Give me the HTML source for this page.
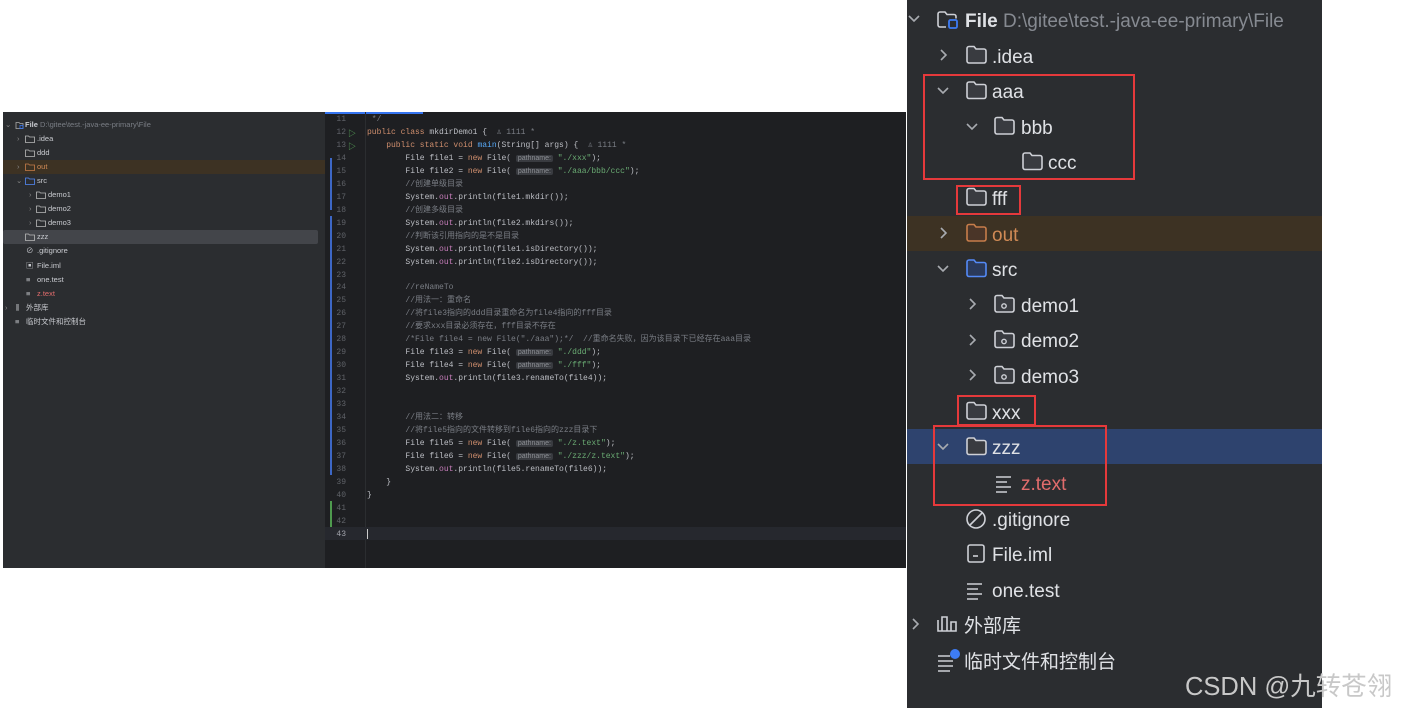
<!DOCTYPE html>
<html><head><meta charset="utf-8"><style>
*{margin:0;padding:0;box-sizing:border-box}
body{width:1401px;height:708px;background:#fff;position:relative;overflow:hidden;font-family:"Liberation Sans","Noto Sans CJK SC",sans-serif}
.abs{position:absolute}
#lt{left:3px;top:112px;width:322px;height:456px;background:#2b2d30}
#ed{left:325px;top:112px;width:581px;height:456px;background:#1e1f22}
#rp{left:907px;top:0;width:415px;height:708px;background:#2b2d30}
.rr{position:absolute;height:24px;line-height:24px;font-size:19px;color:#dfe1e5;white-space:nowrap;margin-top:2px}
.rr svg,.sr svg{position:absolute}
.sr{position:absolute;height:12px;line-height:12px;font-size:7.5px;color:#c9cbd0;white-space:nowrap}
.cl{position:absolute;left:0;height:13px;line-height:13px;font-family:"Liberation Mono","Noto Sans CJK SC",monospace;font-size:8px;color:#bcbec4;white-space:pre}
.ln{position:absolute;left:0;width:21px;text-align:right;color:#5f6268}
.code{position:absolute;left:42px}
.k{color:#cf8e6d}.s{color:#6aab73}.c{color:#7a7e85}.o{color:#c77dbb}.m{color:#56a8f5}
.h{background:#393b40;color:#8c8f94;font-family:"Liberation Sans",sans-serif;font-size:7px;padding:0 2px;border-radius:2px}
.box{position:absolute;border:2px solid #e5393b}
</style></head><body>

<div id="lt" class="abs">
  <div class="abs" style="left:0;top:48px;width:322px;height:14px;background:#3d3223"></div>
  <div class="abs" style="left:0;top:118px;width:315px;height:14px;background:#43454a;border-radius:2px"></div>
</div>
<div class="sr" style="left:5px;top:119px"><span style="color:#888">⌄</span></div>
<div class="sr" style="left:25px;top:119px"><b>File</b> <span style="color:#7a7e85">D:\gitee\test.-java-ee-primary\File</span></div>
<svg class="abs" style="left:15px;top:121px" width="9" height="8"><path d="M1 1.5h3l1 1h3v5h-7z" fill="none" stroke="#aaa" stroke-width=".8"/><rect x="5" y="4.5" width="3" height="3" fill="none" stroke="#3574f0" stroke-width=".8"/></svg>
<div class="sr" style="left:17px;top:133px;color:#888">›</div>
<div class="sr" style="left:17px;top:161px;color:#888">›</div>
<div class="sr" style="left:16px;top:175px;color:#888">⌄</div>
<div class="sr" style="left:29px;top:189px;color:#888">›</div>
<div class="sr" style="left:29px;top:203px;color:#888">›</div>
<div class="sr" style="left:29px;top:217px;color:#888">›</div>
<div class="sr" style="left:5px;top:302px;color:#888">›</div>
<svg class="abs" style="left:25px;top:135px" width="10" height="8"><path d="M.5 1h3l1 1h5v5.5h-9z" fill="none" stroke="#bbb" stroke-width=".8"/></svg>
<svg class="abs" style="left:25px;top:149px" width="10" height="8"><path d="M.5 1h3l1 1h5v5.5h-9z" fill="none" stroke="#bbb" stroke-width=".8"/></svg>
<svg class="abs" style="left:25px;top:163px" width="10" height="8"><path d="M.5 1h3l1 1h5v5.5h-9z" fill="none" stroke="#c77d4a" stroke-width=".8"/></svg>
<svg class="abs" style="left:25px;top:177px" width="10" height="8"><path d="M.5 1h3l1 1h5v5.5h-9z" fill="none" stroke="#548af7" stroke-width=".8"/></svg>
<svg class="abs" style="left:36px;top:191px" width="10" height="8"><path d="M.5 1h3l1 1h5v5.5h-9z" fill="none" stroke="#bbb" stroke-width=".8"/></svg>
<svg class="abs" style="left:36px;top:205px" width="10" height="8"><path d="M.5 1h3l1 1h5v5.5h-9z" fill="none" stroke="#bbb" stroke-width=".8"/></svg>
<svg class="abs" style="left:36px;top:219px" width="10" height="8"><path d="M.5 1h3l1 1h5v5.5h-9z" fill="none" stroke="#bbb" stroke-width=".8"/></svg>
<svg class="abs" style="left:25px;top:233px" width="10" height="8"><path d="M.5 1h3l1 1h5v5.5h-9z" fill="none" stroke="#bbb" stroke-width=".8"/></svg>
<div class="sr" style="left:26px;top:245px">⊘</div>
<div class="sr" style="left:26px;top:260px">▣</div>
<div class="sr" style="left:26px;top:274px">≡</div>
<div class="sr" style="left:26px;top:288px">≡</div>
<div class="sr" style="left:16px;top:302px">⫼</div>
<div class="sr" style="left:15px;top:316px">≡</div>
<div class="sr" style="left:37px;top:133px">.idea</div>
<div class="sr" style="left:37px;top:147px">ddd</div>
<div class="sr" style="left:37px;top:161px;color:#d08a55">out</div>
<div class="sr" style="left:37px;top:175px">src</div>
<div class="sr" style="left:48px;top:189px">demo1</div>
<div class="sr" style="left:48px;top:203px">demo2</div>
<div class="sr" style="left:48px;top:217px">demo3</div>
<div class="sr" style="left:37px;top:231px">zzz</div>
<div class="sr" style="left:37px;top:245px">.gitignore</div>
<div class="sr" style="left:37px;top:260px">File.iml</div>
<div class="sr" style="left:37px;top:274px">one.test</div>
<div class="sr" style="left:37px;top:288px;color:#e06c6c">z.text</div>
<div class="sr" style="left:26px;top:302px">外部库</div>
<div class="sr" style="left:26px;top:316px">临时文件和控制台</div>

<div id="ed" class="abs">
  <div class="abs" style="left:0;top:0;width:98px;height:2px;background:#3574f0"></div>
  <div class="abs" style="left:40px;top:0;width:1px;height:456px;background:#2b2d30"></div>
  <div class="abs" style="left:0;top:415px;width:581px;height:13px;background:#26282e"></div>
  <div class="abs" style="left:42px;top:417px;width:1px;height:10px;background:#ccc"></div>
  <div class="abs" style="left:5px;top:46px;width:2px;height:52px;background:#3d67c6"></div>
  <div class="abs" style="left:5px;top:104px;width:2px;height:259px;background:#3d67c6"></div>
  <div class="abs" style="left:5px;top:389px;width:2px;height:26px;background:#4e9a4e"></div>
  <div class="abs" style="left:23px;top:16px;color:#5fb760;font-size:8px">▷</div>
  <div class="abs" style="left:23px;top:29px;color:#5fb760;font-size:8px">▷</div>
</div>
<div class="abs" style="left:325px;top:113px;width:581px;height:455px">
<div class="cl" style="top:0"><span class="ln">11</span><span class="code"><span class="c"> */</span></span></div>
<div class="cl" style="top:13px"><span class="ln">12</span><span class="code"><span class="k">public class</span> mkdirDemo1 {  <span class="c">♙ 1111 *</span></span></div>
<div class="cl" style="top:26px"><span class="ln">13</span><span class="code">    <span class="k">public static void</span> <span class="m">main</span>(String[] args) {  <span class="c">♙ 1111 *</span></span></div>
<div class="cl" style="top:39px"><span class="ln">14</span><span class="code">        File file1 = <span class="k">new</span> File( <span class="h">pathname:</span> <span class="s">"./xxx"</span>);</span></div>
<div class="cl" style="top:52px"><span class="ln">15</span><span class="code">        File file2 = <span class="k">new</span> File( <span class="h">pathname:</span> <span class="s">"./aaa/bbb/ccc"</span>);</span></div>
<div class="cl" style="top:65px"><span class="ln">16</span><span class="code"><span class="c">        //创建单级目录</span></span></div>
<div class="cl" style="top:78px"><span class="ln">17</span><span class="code">        System.<span class="o">out</span>.println(file1.mkdir());</span></div>
<div class="cl" style="top:91px"><span class="ln">18</span><span class="code"><span class="c">        //创建多级目录</span></span></div>
<div class="cl" style="top:104px"><span class="ln">19</span><span class="code">        System.<span class="o">out</span>.println(file2.mkdirs());</span></div>
<div class="cl" style="top:117px"><span class="ln">20</span><span class="code"><span class="c">        //判断该引用指向的是不是目录</span></span></div>
<div class="cl" style="top:130px"><span class="ln">21</span><span class="code">        System.<span class="o">out</span>.println(file1.isDirectory());</span></div>
<div class="cl" style="top:143px"><span class="ln">22</span><span class="code">        System.<span class="o">out</span>.println(file2.isDirectory());</span></div>
<div class="cl" style="top:156px"><span class="ln">23</span></div>
<div class="cl" style="top:168px"><span class="ln">24</span><span class="code"><span class="c">        //reNameTo</span></span></div>
<div class="cl" style="top:181px"><span class="ln">25</span><span class="code"><span class="c">        //用法一：重命名</span></span></div>
<div class="cl" style="top:194px"><span class="ln">26</span><span class="code"><span class="c">        //将file3指向的ddd目录重命名为file4指向的fff目录</span></span></div>
<div class="cl" style="top:207px"><span class="ln">27</span><span class="code"><span class="c">        //要求xxx目录必须存在，fff目录不存在</span></span></div>
<div class="cl" style="top:220px"><span class="ln">28</span><span class="code"><span class="c">        /*File file4 = new File("./aaa");*/  //重命名失败，因为该目录下已经存在aaa目录</span></span></div>
<div class="cl" style="top:233px"><span class="ln">29</span><span class="code">        File file3 = <span class="k">new</span> File( <span class="h">pathname:</span> <span class="s">"./ddd"</span>);</span></div>
<div class="cl" style="top:246px"><span class="ln">30</span><span class="code">        File file4 = <span class="k">new</span> File( <span class="h">pathname:</span> <span class="s">"./fff"</span>);</span></div>
<div class="cl" style="top:259px"><span class="ln">31</span><span class="code">        System.<span class="o">out</span>.println(file3.renameTo(file4));</span></div>
<div class="cl" style="top:272px"><span class="ln">32</span></div>
<div class="cl" style="top:285px"><span class="ln">33</span></div>
<div class="cl" style="top:298px"><span class="ln">34</span><span class="code"><span class="c">        //用法二：转移</span></span></div>
<div class="cl" style="top:311px"><span class="ln">35</span><span class="code"><span class="c">        //将file5指向的文件转移到file6指向的zzz目录下</span></span></div>
<div class="cl" style="top:324px"><span class="ln">36</span><span class="code">        File file5 = <span class="k">new</span> File( <span class="h">pathname:</span> <span class="s">"./z.text"</span>);</span></div>
<div class="cl" style="top:337px"><span class="ln">37</span><span class="code">        File file6 = <span class="k">new</span> File( <span class="h">pathname:</span> <span class="s">"./zzz/z.text"</span>);</span></div>
<div class="cl" style="top:350px"><span class="ln">38</span><span class="code">        System.<span class="o">out</span>.println(file5.renameTo(file6));</span></div>
<div class="cl" style="top:363px"><span class="ln">39</span><span class="code">    }</span></div>
<div class="cl" style="top:376px"><span class="ln">40</span><span class="code">}</span></div>
<div class="cl" style="top:389px"><span class="ln">41</span></div>
<div class="cl" style="top:402px"><span class="ln">42</span></div>
<div class="cl" style="top:415px"><span class="ln" style="color:#a1a3ab">43</span></div>
</div>

<div id="rp" class="abs">
  <div class="abs" style="left:0;top:216px;width:415px;height:35px;background:#3d3223"></div>
  <div class="abs" style="left:0;top:429px;width:415px;height:35px;background:#2e436e"></div>
</div>
<svg class="abs" style="left:0;top:0" width="1401" height="708">
<g fill="none" stroke="#a8abb0" stroke-width="1.6">
<path d="M909 16l5 5 5-5"/>
<path d="M941 50l5 5-5 5"/>
<path d="M938 88l5 5 5-5"/>
<path d="M967 124l5 5 5-5"/>
<path d="M941 228l5 5-5 5"/>
<path d="M938 266l5 5 5-5"/>
<path d="M970 299l5 5-5 5"/>
<path d="M970 335l5 5-5 5"/>
<path d="M970 370l5 5-5 5"/>
<path d="M938 444l5 5 5-5"/>
<path d="M913 619l5 5-5 5"/>
</g>
<g fill="#393b40" stroke="#ced0d6" stroke-width="1.6">
<path id="fd" d="M967 48.5a2 2 0 0 1 2-2h5l2 2.5h8a2 2 0 0 1 2 2v10a2 2 0 0 1-2 2h-15a2 2 0 0 1-2-2z"/>
<use href="#fd" y="35.5"/>
<use href="#fd" x="28" y="71"/>
<use href="#fd" x="56" y="106.5"/>
<use href="#fd" y="142"/>
<use href="#fd" x="28" y="249"/>
<use href="#fd" x="28" y="284.5"/>
<use href="#fd" x="28" y="320"/>
<use href="#fd" y="356"/>
<use href="#fd" y="391.5"/>
</g>
<circle cx="1004" cy="306" r="2.2" fill="none" stroke="#ced0d6" stroke-width="1.4"/>
<circle cx="1004" cy="341.5" r="2.2" fill="none" stroke="#ced0d6" stroke-width="1.4"/>
<circle cx="1004" cy="377" r="2.2" fill="none" stroke="#ced0d6" stroke-width="1.4"/>
<path d="M967 226.5a2 2 0 0 1 2-2h5l2 2.5h8a2 2 0 0 1 2 2v10a2 2 0 0 1-2 2h-15a2 2 0 0 1-2-2z" fill="#4a3528" stroke="#c77d4a" stroke-width="1.6"/>
<path d="M967 262a2 2 0 0 1 2-2h5l2 2.5h8a2 2 0 0 1 2 2v10a2 2 0 0 1-2 2h-15a2 2 0 0 1-2-2z" fill="#2b3a5a" stroke="#548af7" stroke-width="1.6"/>
<path d="M938 14a2 2 0 0 1 2-2h5l2 2.5h7a2 2 0 0 1 2 2v2M938 14v11a2 2 0 0 0 2 2h6" fill="none" stroke="#ced0d6" stroke-width="1.6"/>
<rect x="949" y="20" width="8" height="8" rx="1.5" fill="none" stroke="#3d7cf5" stroke-width="1.8"/>
<g stroke="#ced0d6" stroke-width="1.6" fill="none">
<path d="M996 477h15M996 482h11M996 487h15M996 492h11"/>
<path d="M967 584h15M967 589h11M967 594h15M967 599h11"/>
<circle cx="976" cy="519" r="9"/><path d="M970 525l12-12"/>
<rect x="968" y="545" width="16" height="17" rx="2"/><path d="M973 556h5"/>
<path d="M938 620v11h4v-14h5v14h4v-9h5v9h-18"/>
<path d="M938 656h12M938 661h15M938 666h15M938 671h12"/>
</g>
<circle cx="955" cy="654" r="5" fill="#3d7cf5"/>
</svg>
<div class="rr" style="left:965px;top:8px"><b>File</b> <span style="color:#868a91">D:\gitee\test.-java-ee-primary\File</span></div>
<div class="rr" style="left:992px;top:44px">.idea</div>
<div class="rr" style="left:992px;top:79px">aaa</div>
<div class="rr" style="left:1021px;top:115px">bbb</div>
<div class="rr" style="left:1048px;top:150px">ccc</div>
<div class="rr" style="left:992px;top:186px">fff</div>
<div class="rr" style="left:992px;top:222px;color:#d08a55">out</div>
<div class="rr" style="left:992px;top:257px">src</div>
<div class="rr" style="left:1021px;top:293px">demo1</div>
<div class="rr" style="left:1021px;top:328px">demo2</div>
<div class="rr" style="left:1021px;top:364px">demo3</div>
<div class="rr" style="left:992px;top:400px">xxx</div>
<div class="rr" style="left:992px;top:435px">zzz</div>
<div class="rr" style="left:1021px;top:471px;color:#e06c6c">z.text</div>
<div class="rr" style="left:992px;top:507px">.gitignore</div>
<div class="rr" style="left:992px;top:542px">File.iml</div>
<div class="rr" style="left:992px;top:578px">one.test</div>
<div class="rr" style="left:964px;top:613px">外部库</div>
<div class="rr" style="left:964px;top:649px">临时文件和控制台</div>

<div class="box" style="left:923px;top:74px;width:212px;height:106px"></div>
<div class="box" style="left:956px;top:185px;width:65px;height:30px"></div>
<div class="box" style="left:957px;top:395px;width:79px;height:31px"></div>
<div class="box" style="left:933px;top:425px;width:174px;height:81px"></div>

<div class="abs" style="left:1185px;top:666px;font-size:25.5px;color:#c8c8c8;white-space:nowrap;font-family:'Liberation Sans','Noto Sans CJK SC',sans-serif">CSDN @九转苍翎</div>
</body></html>
